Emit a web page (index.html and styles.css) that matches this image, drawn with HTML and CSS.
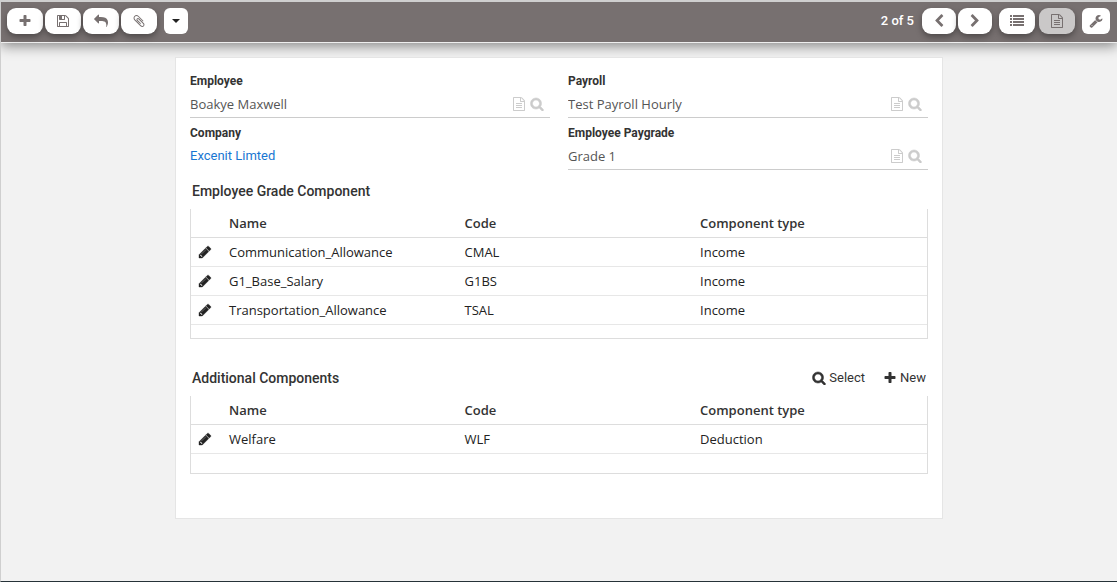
FILE: index.html
```html
<!DOCTYPE html>
<html lang="en">
<head>
<meta charset="utf-8">
<meta name="viewport" content="width=device-width, initial-scale=1">
<title>Employee payroll</title>
<link rel="stylesheet" href="styles.css">
</head>
<body class="page">
<svg class="sprite" aria-hidden="true">
  <symbol id="plus" viewBox="0 0 1792 1792"><path d="M1600 736v192q0 40-28 68t-68 28h-416v416q0 40-28 68t-68 28h-192q-40 0-68-28t-28-68v-416h-416q-40 0-68-28t-28-68v-192q0-40 28-68t68-28h416v-416q0-40 28-68t68-28h192q40 0 68 28t28 68v416h416q40 0 68 28t28 68z"/></symbol>
  <symbol id="save" viewBox="0 0 1792 1792"><path d="M512 1536h768v-384h-768v384zm896 0h128v-896q0-14-10-38.5t-20-34.5l-281-281q-10-10-34-20t-39-10v416q0 40-28 68t-68 28h-576q-40 0-68-28t-28-68v-416h-128v1280h128v-416q0-40 28-68t68-28h832q40 0 68 28t28 68v416zm-384-928v-320q0-13-9.5-22.5t-22.5-9.5h-192q-13 0-22.5 9.5t-9.5 22.5v320q0 13 9.5 22.5t22.5 9.5h192q13 0 22.5-9.5t9.5-22.5zm640 32v928q0 40-28 68t-68 28h-1344q-40 0-68-28t-28-68v-1344q0-40 28-68t68-28h928q40 0 88 20t76 48l280 280q28 28 48 76t20 88z"/></symbol>
  <symbol id="reply" viewBox="0 0 1792 1792"><path d="M1792 1120q0 166-127 451-3 7-10.5 24t-13.5 30-13 22q-12 17-28 17-15 0-23.5-10t-8.5-25q0-9 2.5-26.5t2.5-23.5q5-68 5-123 0-101-17.5-181t-48.5-138.5-80-101-105.5-69.5-133-42.5-154-21.5-175.5-6h-224v256q0 26-19 45t-45 19-45-19l-512-512q-19-19-19-45t19-45l512-512q19-19 45-19t45 19 19 45v256h224q713 0 875 403 53 134 53 333z"/></symbol>
  <symbol id="clip" viewBox="0 0 1792 1792"><path d="M1596 1385q0 117-79 196t-196 79q-135 0-235-100l-777-776q-113-115-113-271 0-159 110-270t269-111q158 0 273 113l605 606q10 10 10 22 0 16-30.5 46.5t-46.5 30.5q-13 0-23-10l-606-607q-79-77-181-77-106 0-179 75t-73 181q0 105 76 181l776 777q63 63 145 63 64 0 106-42t42-106q0-82-63-145l-581-581q-26-24-60-24-29 0-48 19t-19 48q0 32 25 59l410 410q10 10 10 22 0 16-31 47t-47 31q-12 0-22-10l-410-410q-63-61-63-149 0-82 57-139t139-57q88 0 149 63l581 581q100 98 100 235z"/></symbol>
  <symbol id="caret" viewBox="0 0 8 4"><path d="M0 0h8L4 4z"/></symbol>
  <symbol id="left" viewBox="0 0 1792 1792"><path d="M1427 301l-531 531 531 531q19 19 19 45t-19 45l-166 166q-19 19-45 19t-45-19l-742-742q-19-19-19-45t19-45l742-742q19-19 45-19t45 19l166 166q19 19 19 45t-19 45z"/></symbol>
  <symbol id="right" viewBox="0 0 1792 1792"><path d="M1363 877l-742 742q-19 19-45 19t-45-19l-166-166q-19-19-19-45t19-45l531-531-531-531q-19-19-19-45t19-45l166-166q19-19 45-19t45 19l742 742q19 19 19 45t-19 45z"/></symbol>
  <symbol id="list" viewBox="0 0 14 14"><path d="M0 1h2v2H0zM3 1h11v2H3zM0 4h2v2H0zM3 4h11v2H3zM0 7h2v2H0zM3 7h11v2H3zM0 10h2v2H0zM3 10h11v2H3z"/></symbol>
  <symbol id="file" viewBox="0 0 1792 1792"><path d="M1596 380q28 28 48 76t20 88v1152q0 40-28 68t-68 28h-1344q-40 0-68-28t-28-68v-1600q0-40 28-68t68-28h896q40 0 88 20t76 48zm-444-244v376h376q-10-29-22-41l-313-313q-12-12-41-22zm384 1528v-1024h-416q-40 0-68-28t-28-68v-416h-768v1536h1280zm-1024-864q0-14 9-23t23-9h704q14 0 23 9t9 23v64q0 14-9 23t-23 9h-704q-14 0-23-9t-9-23v-64zm736 224q14 0 23 9t9 23v64q0 14-9 23t-23 9h-704q-14 0-23-9t-9-23v-64q0-14 9-23t23-9h704zm0 256q14 0 23 9t9 23v64q0 14-9 23t-23 9h-704q-14 0-23-9t-9-23v-64q0-14 9-23t23-9h704z"/></symbol>
  <symbol id="wrench" viewBox="0 0 1792 1792"><path d="M448 1472q0-26-19-45t-45-19-45 19-19 45 19 45 45 19 45-19 19-45zm644-420l-682 682q-37 37-90 37-52 0-91-37l-106-108q-38-36-38-90 0-53 38-91l681-681q39 98 114.500 173.500t173.500 114.500zm634-435q0 39-23 106-47 134-164.500 217.500t-258.500 83.500q-185 0-316.500-131.500t-131.500-316.500 131.500-316.500 316.500-131.500q58 0 121.500 16.500t107.500 46.500q16 11 16 28t-16 28l-293 169v224l193 107q5-3 79-48.500t135.500-81 70.500-35.500q15 0 23.500 10t8.500 25z"/></symbol>
  <symbol id="search" viewBox="0 0 1792 1792"><path stroke="currentColor" stroke-width="70" d="M1216 832q0-185-131.500-316.500t-316.500-131.500-316.500 131.500-131.500 316.500 131.500 316.500 316.500 131.500 316.500-131.500 131.500-316.500zm512 832q0 52-38 90t-90 38q-54 0-90-38l-343-342q-179 124-399 124-143 0-273.500-55.500t-225-150-150-225-55.500-273.500 55.500-273.500 150-225 225-150 273.500-55.500 273.500 55.500 225 150 150 225 55.500 273.500q0 220-124 399l343 343q37 37 37 90z"/></symbol>
  <symbol id="pencil" viewBox="0 0 1792 1792"><path stroke="currentColor" stroke-width="50" d="M491 1536l91-91-235-235-91 91v107h128v128h107zm523-928q0-22-22-22-10 0-17 7l-542 542q-7 7-7 17 0 22 22 22 10 0 17-7l542-542q7-7 7-17zm-54-192l416 416-832 832h-416v-416zm683 96q0 53-37 90l-166 166-416-416 166-165q36-38 90-38 53 0 91 38l235 234q37 39 37 91z"/></symbol>
</svg>

<header class="toolbar">
  <div class="group">
    <button class="tool" type="button" aria-label="New"><svg class="icon"><use href="#plus"/></svg></button>
    <button class="tool" type="button" aria-label="Save"><svg class="icon"><use href="#save"/></svg></button>
    <button class="tool" type="button" aria-label="Undo"><svg class="icon"><use href="#reply"/></svg></button>
    <button class="tool" type="button" aria-label="Attachments"><svg class="icon"><use href="#clip"/></svg></button>
  </div>
  <button class="tool tool-caret" type="button" aria-label="More"><svg class="caret"><use href="#caret"/></svg></button>
  <span class="pager">2 of 5</span>
  <div class="group">
    <button class="tool tool-nav" type="button" aria-label="Previous"><svg class="icon"><use href="#left"/></svg></button>
    <button class="tool tool-nav" type="button" aria-label="Next"><svg class="icon"><use href="#right"/></svg></button>
  </div>
  <div class="group group-views">
    <button class="tool" type="button" aria-label="List view"><svg class="icon"><use href="#list"/></svg></button>
    <button class="tool tool-active" type="button" aria-label="Form view"><svg class="icon"><use href="#file"/></svg></button>
  </div>
  <button class="tool tool-wrench" type="button" aria-label="Settings"><svg class="icon"><use href="#wrench"/></svg></button>
</header>

<main class="card">
  <form class="fields">
    <div class="field">
      <label class="label" for="employee">Employee</label>
      <div class="control">
        <input class="input" id="employee" type="text" value="Boakye Maxwell">
        <button class="mini" type="button" aria-label="Open employee"><svg class="icon"><use href="#file"/></svg></button>
        <button class="mini" type="button" aria-label="Find employee"><svg class="icon"><use href="#search"/></svg></button>
      </div>
    </div>
    <div class="field">
      <label class="label" for="payroll">Payroll</label>
      <div class="control">
        <input class="input" id="payroll" type="text" value="Test Payroll Hourly">
        <button class="mini" type="button" aria-label="Open payroll"><svg class="icon"><use href="#file"/></svg></button>
        <button class="mini" type="button" aria-label="Find payroll"><svg class="icon"><use href="#search"/></svg></button>
      </div>
    </div>
    <div class="field">
      <span class="label">Company</span>
      <a class="link" href="#company">Excenit Limted</a>
    </div>
    <div class="field">
      <label class="label" for="paygrade">Employee Paygrade</label>
      <div class="control">
        <input class="input" id="paygrade" type="text" value="Grade 1">
        <button class="mini" type="button" aria-label="Open paygrade"><svg class="icon"><use href="#file"/></svg></button>
        <button class="mini" type="button" aria-label="Find paygrade"><svg class="icon"><use href="#search"/></svg></button>
      </div>
    </div>
  </form>

  <section class="panel">
    <div class="panel-head"><h2 class="title">Employee Grade Component</h2></div>
    <div class="grid">
      <table class="table">
        <colgroup><col class="col-edit"><col class="col-name"><col class="col-code"><col></colgroup>
        <thead><tr><th></th><th>Name</th><th>Code</th><th>Component type</th></tr></thead>
        <tbody>
          <tr><td><button class="edit" type="button" aria-label="Edit Communication_Allowance"><svg class="icon"><use href="#pencil"/></svg></button></td><td>Communication_Allowance</td><td>CMAL</td><td>Income</td></tr>
          <tr><td><button class="edit" type="button" aria-label="Edit G1_Base_Salary"><svg class="icon"><use href="#pencil"/></svg></button></td><td>G1_Base_Salary</td><td>G1BS</td><td>Income</td></tr>
          <tr><td><button class="edit" type="button" aria-label="Edit Transportation_Allowance"><svg class="icon"><use href="#pencil"/></svg></button></td><td>Transportation_Allowance</td><td>TSAL</td><td>Income</td></tr>
        </tbody>
      </table>
    </div>
  </section>

  <section class="panel">
    <div class="panel-head">
      <h2 class="title">Additional Components</h2>
      <button class="action" type="button"><svg class="icon"><use href="#search"/></svg>Select</button>
      <button class="action" type="button"><svg class="icon"><use href="#plus"/></svg>New</button>
    </div>
    <div class="grid grid-tall">
      <table class="table">
        <colgroup><col class="col-edit"><col class="col-name"><col class="col-code"><col></colgroup>
        <thead><tr><th></th><th>Name</th><th>Code</th><th>Component type</th></tr></thead>
        <tbody>
          <tr><td><button class="edit" type="button" aria-label="Edit Welfare"><svg class="icon"><use href="#pencil"/></svg></button></td><td>Welfare</td><td>WLF</td><td>Deduction</td></tr>
        </tbody>
      </table>
    </div>
  </section>
</main>
</body>
</html>
```
FILE: styles.css
```css
* { box-sizing: border-box; }

.page {
  min-height: 100vh;
  margin: 0;
  border-left: 1px solid #cfcfcf;
  border-bottom: 1px solid #263238;
  background: #f2f2f2;
  color: #222;
  font-family: "Open Sans", "Noto Sans", sans-serif;
  font-size: 13px;
}

.sprite { display: none; }
.icon { width: 14px; height: 14px; fill: currentColor; flex: none; }
.caret { width: 8px; height: 4px; fill: #222; }

button {
  margin: 0;
  padding: 0;
  border: 0;
  background: none;
  color: inherit;
  font: inherit;
}

.toolbar {
  display: flex;
  align-items: center;
  height: 43px;
  padding: 0 7px 2px 6px;
  border-top: 2px solid #cfcfcf;
  border-bottom: 1px solid #eee;
  background: #777070;
  box-shadow: 0 3px 12px rgba(0, 0, 0, 0.45);
}

.group { display: flex; gap: 2px; margin-right: 7px; }
.group-views { gap: 4px; }

.tool {
  display: flex;
  align-items: center;
  justify-content: center;
  width: 36px;
  height: 26px;
  border-radius: 9px;
  background: #fff;
  color: #777070;
  box-shadow: 0 3px 6px rgba(0, 0, 0, 0.35);
}

.tool-nav { width: 34px; }
.tool-caret { width: 24px; border-radius: 6px; box-shadow: none; }
.tool-wrench { width: 28px; border-radius: 6px; box-shadow: none; }
.tool-active { background: #cac8c8; }

.pager {
  margin-left: auto;
  margin-right: 8px;
  color: #fff;
  font: 500 13px/18px Roboto, sans-serif;
}

.card {
  max-width: 768px;
  min-height: 462px;
  margin: 14px auto 0;
  padding: 16px 14px;
  border: 1px solid #e5e5e5;
  background: #fff;
}

.fields {
  display: grid;
  grid-template-columns: 1fr 1fr;
  gap: 8px 18px;
}

.label {
  display: block;
  height: 18px;
  color: #333;
  font: 700 12px/14px Roboto, sans-serif;
}

.control {
  display: flex;
  align-items: center;
  height: 26px;
  padding: 0 6px 2px 0;
  border-bottom: 1px solid #ccc;
}

.input {
  flex: 1;
  min-width: 0;
  padding: 0;
  border: 0;
  background: none;
  color: #555;
  font: inherit;
}

.mini { display: flex; margin-left: 4px; color: #ccc; }

.link {
  color: #1976d2;
  font: 13px/24px Roboto, sans-serif;
  text-decoration: none;
}

.panel { margin-top: 9px; }
.panel + .panel { margin-top: 27px; }

.panel-head {
  display: flex;
  align-items: center;
  gap: 18px;
  height: 24px;
  padding: 0 2px;
}

.title {
  flex: 1;
  margin: 0;
  color: #333;
  font: 500 14px/20px Roboto, sans-serif;
}

.action {
  display: flex;
  align-items: center;
  gap: 3px;
  color: #333;
  font: 13px/20px Roboto, sans-serif;
}

.grid {
  margin-top: 6px;
  padding-bottom: 13px;
  border: 1px solid #ddd;
  border-top: 0;
}

.grid-tall { padding-bottom: 19px; }

.table {
  width: 100%;
  border-collapse: separate;
  border-spacing: 0;
  table-layout: fixed;
}

.col-edit { width: 33px; }
.col-name { width: 32%; }
.col-code { width: 32%; }

.table th,
.table td {
  height: 29px;
  padding: 0 5px;
  border-bottom: 1px solid #e7e7e7;
  font-weight: 400;
  text-align: left;
}

.table th { border-color: #ddd; color: #333; font-weight: 600; }

.edit { display: flex; padding-left: 2px; }
```
